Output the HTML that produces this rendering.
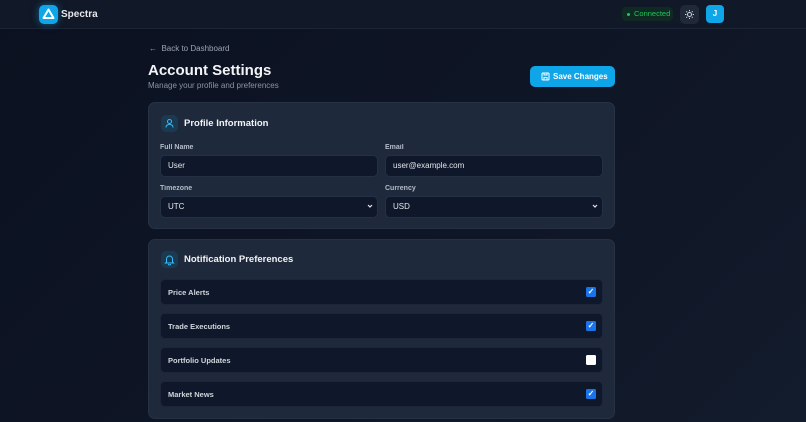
<!DOCTYPE html>
<html><head><style>
*{box-sizing:border-box;margin:0;padding:0}
body{width:806px;height:422px;overflow:hidden;background:linear-gradient(135deg,#0b1120,#0f1626 60%,#131c2c);font-family:"Liberation Sans",sans-serif;color:#e5e7eb;position:relative}
.hdr{position:absolute;left:0;top:0;width:806px;height:29px;background:#111827;border-bottom:1px solid #1c2536}
.logo{position:absolute;left:39px;top:5px;width:19px;height:19px;border-radius:5px;background:#0ea5e9;box-shadow:0 0 8px rgba(14,165,233,.5)}
.brand{position:absolute;left:61px;top:9px;font-size:10px;font-weight:bold;color:#e5e7eb}
.conn{position:absolute;left:622px;top:7px;width:51px;height:14px;border-radius:4px;background:#0f2a22;color:#22c55e;font-size:7.5px;line-height:14px;padding-left:12px}
.conn:before{content:"";position:absolute;left:5px;top:5.5px;width:3px;height:3px;border-radius:50%;background:#22c55e}
.sun{position:absolute;left:680px;top:5px;width:19px;height:19px;border-radius:5px;background:#1f2937}
.av{position:absolute;left:706px;top:5px;width:18px;height:18px;border-radius:4px;background:#0ea5e9;color:#fff;font-size:8px;font-weight:bold;text-align:center;line-height:18px}
.back{position:absolute;left:149px;top:44px;font-size:8px;color:#9ca3af}
h1{position:absolute;left:148px;top:62px;font-size:15px;color:#f3f4f6}
.sub{position:absolute;left:148px;top:81px;font-size:8px;color:#8b95a5}
.save{position:absolute;left:530px;top:66px;width:85px;height:21px;border-radius:5px;background:#0ea5e9;color:#fff;font-size:8px;font-weight:bold;line-height:21px;padding-left:23px}
.card{position:absolute;left:148px;width:467px;background:#1e293b;border:1px solid #263244;border-radius:7px}
.ic{position:absolute;left:12px;width:17px;height:17px;border-radius:5px;background:#1a3a52}
.ct{position:absolute;left:35px;font-size:9.5px;font-weight:bold;color:#f3f4f6}
.lbl{position:absolute;font-size:7px;color:#cbd5e1;font-weight:bold;opacity:.85}
.inp{position:absolute;width:218px;height:22px;border-radius:5px;background:#0f172a;border:1px solid #243044;font-size:8px;color:#e5e7eb;line-height:20px;padding-left:7px}
.chev{position:absolute;right:3px;top:5px;width:8px;height:8px}
.row{position:absolute;left:11px;width:443px;height:26px;border-radius:5px;background:#0f172a;border:1px solid #1c2638;font-size:7.5px;color:#d1d5db;line-height:25px;padding-left:7px;font-weight:bold}
.cb{position:absolute;right:6px;top:7px;width:10px;height:10px;border-radius:1.5px;background:#1a73e8;color:#fff;font-size:8px;line-height:10px;text-align:center}
.cb.off{background:#fff}
</style></head><body>
<div class="hdr">
<div class="logo"><svg width="19" height="19" viewBox="0 0 19 19"><path d="M9.5 4.5L14.5 13H4.5Z" fill="none" stroke="#fff" stroke-width="2" stroke-linejoin="round"/></svg></div>
<div class="brand">Spectra</div>
<div class="conn">Connected</div>
<div class="sun"><svg width="19" height="19" viewBox="0 0 19 19" stroke="#cbd5e1" stroke-width="1" fill="none"><circle cx="9.5" cy="9.5" r="2"/><path d="M9.5 5v1.3M9.5 12.7V14M5 9.5h1.3M12.7 9.5H14M6.3 6.3l.9.9M11.8 11.8l.9.9M6.3 12.7l.9-.9M11.8 7.2l.9-.9"/></svg></div>
<div class="av">J</div>
</div>
<div class="back">←&nbsp; Back to Dashboard</div>
<h1>Account Settings</h1>
<div class="sub">Manage your profile and preferences</div>
<div class="save"><svg style="position:absolute;left:11px;top:6px" width="9" height="9" viewBox="0 0 9 9" fill="none" stroke="#fff" stroke-width="1"><rect x="1" y="1" width="7" height="7" rx="1"/><path d="M3 1v2h3V1M3 8V5.5h3V8"/></svg>Save Changes</div>

<div class="card" style="top:102px;height:127px">
<div class="ic" style="top:12px"><svg width="17" height="17" viewBox="0 0 17 17" fill="none" stroke="#38bdf8" stroke-width="1"><circle cx="8.5" cy="6.5" r="2"/><path d="M5 12.5c0-2 1.5-3 3.5-3s3.5 1 3.5 3"/></svg></div>
<div class="ct" style="top:15px">Profile Information</div>
<div class="lbl" style="left:11px;top:41px">Full Name</div>
<div class="lbl" style="left:236px;top:41px">Email</div>
<div class="inp" style="left:11px;top:52px">User</div>
<div class="inp" style="left:236px;top:52px">user@example.com</div>
<div class="lbl" style="left:11px;top:82px">Timezone</div>
<div class="lbl" style="left:236px;top:82px">Currency</div>
<div class="inp" style="left:11px;top:93px">UTC<svg class="chev" viewBox="0 0 8 8"><path d="M2 3l2 2 2-2" fill="none" stroke="#e5e7eb" stroke-width="1.2"/></svg></div>
<div class="inp" style="left:236px;top:93px">USD<svg class="chev" viewBox="0 0 8 8"><path d="M2 3l2 2 2-2" fill="none" stroke="#e5e7eb" stroke-width="1.2"/></svg></div>
</div>

<div class="card" style="top:239px;height:180px">
<div class="ic" style="top:11px"><svg width="17" height="17" viewBox="0 0 17 17" fill="none" stroke="#38bdf8" stroke-width="1"><path d="M5.5 11V8a3 3 0 016 0v3l1 1h-8z"/><path d="M7.5 13a1 1 0 002 0"/></svg></div>
<div class="ct" style="top:14px">Notification Preferences</div>
<div class="row" style="top:39px">Price Alerts<span class="cb">✓</span></div>
<div class="row" style="top:73px">Trade Executions<span class="cb">✓</span></div>
<div class="row" style="top:107px">Portfolio Updates<span class="cb off"></span></div>
<div class="row" style="top:141px">Market News<span class="cb">✓</span></div>
</div>
</body></html>
